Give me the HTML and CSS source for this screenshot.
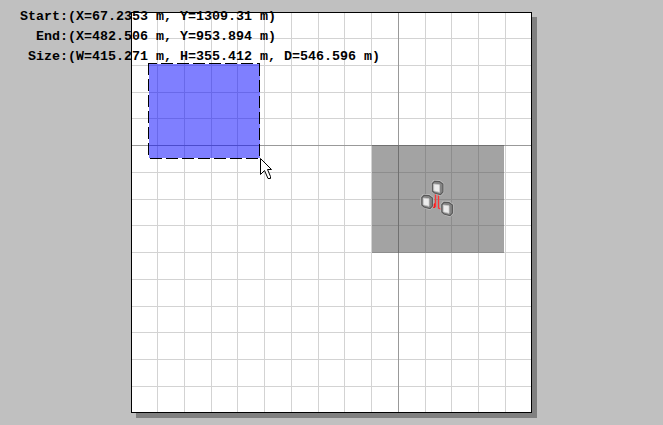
FILE: index.html
```html
<!DOCTYPE html>
<html lang="en">
<head>
<meta charset="utf-8">
<title>Selection</title>
<link rel="stylesheet" href="styles.css">
</head>
<body>
<svg class="canvas" width="663" height="425" viewBox="0 0 663 425" shape-rendering="crispEdges">
  <rect class="shadow" x="136" y="17" width="401" height="401"/>
  <rect class="paper" x="131.5" y="12.5" width="400" height="400"/>
  <path class="grid" d="M157.5 13V412M184.5 13V412M211.5 13V412M237.5 13V412M264.5 13V412M291.5 13V412M318.5 13V412M344.5 13V412M371.5 13V412M425.5 13V412M451.5 13V412M478.5 13V412M505.5 13V412M132 38.5H531M132 65.5H531M132 92.5H531M132 118.5H531M132 172.5H531M132 199.5H531M132 225.5H531M132 252.5H531M132 279.5H531M132 306.5H531M132 332.5H531M132 359.5H531M132 386.5H531"/>
  <path class="grid major" d="M398.5 13V412M132 145.5H531"/>
  <rect class="zone" x="372" y="145" width="132" height="108"/>
  <rect class="selection" x="149" y="64" width="111" height="94"/>
  <path class="dash" d="M148.5 63V158M259.5 64V158M150 158.5H260"/>
  <path class="dash top" d="M148 63.5H260"/>
  <defs>
    <g id="node">
      <path class="halo" d="M2 0L8 0L12 3V12L9 15L3 13L0 10V3Z"/>
      <path class="side" d="M3 .8L8 1L11.4 3.5V11.5L9 14.2L3 12.5L.8 10.5V3Z"/>
      <path class="face" d="M2.3 3.5L8 4.3V11.8L2.3 10.3Z"/>
    </g>
  </defs>
  <g shape-rendering="geometricPrecision">
    <path class="link" d="M435.5 194V206.5H432M438.5 194V208L442 209.5"/>
    <path class="arrow" d="M430 206L435 203V208L433 208Z"/>
    <use href="#node" x="431.5" y="180.5"/>
    <use href="#node" x="421" y="194.5"/>
    <use href="#node" x="441" y="201.5"/>
    <path class="cursor" d="M260.5 158.5V174.5L264.5 170.5L268 178.5H270.5V176.5L267.5 169.5H271.5Z"/>
  </g>
</svg>
<div class="readout">
  <div class="line start">Start:(X=67.2353 m, Y=1309.31 m)</div>
  <div class="line end">End:(X=482.506 m, Y=953.894 m)</div>
  <div class="line size">Size:(W=415.271 m, H=355.412 m, D=546.596 m)</div>
</div>
</body>
</html>
```
FILE: styles.css
```css
body {
  margin: 0;
  background: #c0c0c0;
  overflow: hidden;
}
.canvas { display: block; }
.shadow { fill: #808080; }
.paper { fill: #fff; stroke: #000; }
.grid { fill: none; stroke: #d3d3d3; }
.grid.major { stroke: #999; }
.zone { fill: #484848; fill-opacity: .5; }
.selection { fill: #0000ff; fill-opacity: .5; }
.dash { fill: none; stroke: #000; stroke-dasharray: 12 4; }
.dash.top { stroke-dashoffset: 3; }
.halo { fill: #c4c4c4; stroke: #bcbcbc; stroke-width: 1.2; }
.side { fill: #848484; stroke: #585858; stroke-width: 1.1; }
.face { fill: #ececec; stroke: #ccc; stroke-width: .8; }
.link { fill: none; stroke: #f33; stroke-width: 1.3; }
.arrow { fill: #e22; }
.cursor { fill: #fff; stroke: #000; }
.readout {
  position: absolute;
  top: 7px;
  left: 0;
  color: #000;
  font: bold 13.333px/20px "Liberation Mono", monospace;
}
.line { white-space: nowrap; }
.start { padding-left: 20px; }
.end { padding-left: 36px; }
.size { padding-left: 28px; }
```
